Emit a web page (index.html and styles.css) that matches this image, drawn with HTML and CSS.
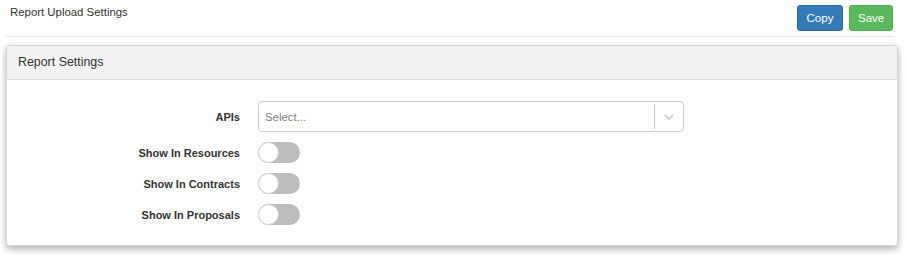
FILE: index.html
```html
<!DOCTYPE html>
<html>
<head>
<meta charset="utf-8">
<link rel="stylesheet" href="styles.css">
</head>
<body>
<div class="topbar">
  <div class="title">Report Upload Settings</div>
  <div class="actions">
    <button class="btn btn-primary">Copy</button>
    <button class="btn btn-success">Save</button>
  </div>
</div>
<div class="panel">
  <div class="panel-heading">Report Settings</div>
  <div class="panel-body">
    <div class="row">
      <label class="lbl">APIs</label>
      <div class="select">
        <span class="placeholder">Select...</span>
        <span class="sep"></span>
        <span class="chev"><svg width="10" height="6" viewBox="0 0 10 6"><path d="M1 1 L5 5 L9 1" fill="none" stroke="#c4c4c4" stroke-width="1.3"/></svg></span>
      </div>
    </div>
    <div class="row toggle-row">
      <label class="lbl">Show In Resources</label>
      <span class="switch"><span class="knob"></span></span>
    </div>
    <div class="row toggle-row">
      <label class="lbl">Show In Contracts</label>
      <span class="switch"><span class="knob"></span></span>
    </div>
    <div class="row toggle-row">
      <label class="lbl">Show In Proposals</label>
      <span class="switch"><span class="knob"></span></span>
    </div>
  </div>
</div>
</body>
</html>
```
FILE: styles.css
```css
html, body {
  margin: 0;
  padding: 0;
  background: #fff;
  font-family: "Liberation Sans", Arial, Helvetica, sans-serif;
  color: #333;
}
body {
  min-height: 256px;
  box-sizing: border-box;
  padding-bottom: 10px;
}
.topbar {
  display: flex;
  justify-content: space-between;
  align-items: flex-start;
  margin: 0 13px 0 6px;
  padding: 5px 0 5px 4px;
  border-bottom: 1px solid #e3e3e3;
}
.title {
  font-size: 11.4px;
  line-height: 14px;
  color: #333;
}
.actions {
  display: flex;
  gap: 6px;
}
.btn {
  font-family: inherit;
  font-size: 11.5px;
  line-height: 16px;
  height: 26px;
  padding: 4px 8px;
  border: 1px solid transparent;
  border-radius: 3px;
  color: #fff;
  cursor: pointer;
}
.btn-primary {
  background: #337ab7;
  border-color: #2e6da4;
  width: 46px;
}
.btn-success {
  background: #5cb85c;
  border-color: #4cae4c;
  width: 44px;
}
.panel {
  margin: 8px 8px 0 6px;
  border: 1px solid #d6d6d6;
  border-radius: 3px;
  box-shadow: 0 3px 7px rgba(0, 0, 0, 0.32);
  background: #fff;
}
.panel-heading {
  background: #f2f2f2;
  border-bottom: 1px solid #dcdcdc;
  height: 33px;
  line-height: 33px;
  padding-left: 11px;
  font-size: 12.4px;
  color: #333;
  border-radius: 3px 3px 0 0;
}
.panel-body {
  padding: 21px 0 20px 0;
  display: flex;
  flex-direction: column;
  gap: 10px;
}
.row {
  display: grid;
  grid-template-columns: 233px 426px;
  column-gap: 18px;
  align-items: center;
}
.lbl {
  text-align: right;
  font-weight: bold;
  font-size: 11px;
  color: #333;
}
.select {
  height: 31px;
  box-sizing: border-box;
  border: 1px solid #cccccc;
  border-radius: 4px;
  display: flex;
  align-items: center;
  padding-left: 6px;
}
.placeholder {
  flex: 1;
  font-size: 11.4px;
  color: #808080;
}
.sep {
  width: 1px;
  align-self: stretch;
  margin: 2px 0;
  background: #cccccc;
}
.chev {
  width: 28px;
  display: flex;
  justify-content: center;
  align-items: center;
}
.switch {
  display: inline-flex;
  align-items: center;
  width: 42px;
  height: 21px;
  box-sizing: border-box;
  border-radius: 11px;
  background: #bdbdbd;
  position: relative;
}
.knob {
  position: absolute;
  left: 0;
  top: 0;
  width: 21px;
  height: 21px;
  box-sizing: border-box;
  border-radius: 50%;
  background: #fff;
  border: 1px solid #d0d0d0;
}
```
